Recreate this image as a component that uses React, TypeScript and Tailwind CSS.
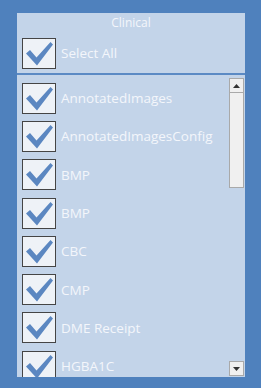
const items = [
  "AnnotatedImages",
  "AnnotatedImagesConfig",
  "BMP",
  "BMP",
  "CBC",
  "CMP",
  "DME Receipt",
  "HGBA1C",
];

function CheckBox() {
  return (
    <div className="w-[34px] h-[31px] shrink-0 border border-[#454545] bg-[#eef2f7] flex items-center justify-center">
      <svg width="30" height="27" viewBox="0 0 30 27">
        <polygon
          points="2,13.5 6,10 12.5,17.5 26.5,2 29,4.5 13,25.5"
          fill="#5b87c1"
        />
      </svg>
    </div>
  );
}

function Row({ label }: { label: string }) {
  return (
    <div className="flex items-center h-[38.3px] shrink-0 pl-[5px] gap-[5px]">
      <CheckBox />
      <span className="text-[13.5px] text-[#f3f6fb] whitespace-nowrap">{label}</span>
    </div>
  );
}

export default function App() {
  return (
    <div
      className="w-[261px] h-[388px] bg-[#4f81bd] pt-[13px] pl-[17px]"
      style={{ fontFamily: '"Open Sans", "Noto Sans", sans-serif' }}
    >
      <div className="w-[228px] h-[364px] bg-[#c3d4e9] flex flex-col overflow-hidden">
        <div className="h-[20px] flex items-center justify-center text-[12px] text-[#f3f6fb]">
          Clinical
        </div>
        <div className="flex items-center h-[38px] pl-[5px] gap-[5px] pt-[2px]">
          <CheckBox />
          <span className="text-[13.5px] text-[#f3f6fb]">Select All</span>
        </div>
        <div className="h-[2px] mt-[2px] bg-[#5b8ac4]" />
        <div className="flex flex-1 min-h-0">
          <div className="flex-1 flex flex-col overflow-hidden pt-[4px]">
            {items.map((label, i) => (
              <Row key={i} label={label} />
            ))}
          </div>
          <div className="w-[15px] mr-[1px] mt-[3px] mb-[1px] flex flex-col">
            <div className="h-[15px] border border-[#a9a9a9] bg-[#f0f0f0] flex items-center justify-center">
              <svg width="7" height="4" viewBox="0 0 7 4">
                <polygon points="3.5,0 7,4 0,4" fill="#333" />
              </svg>
            </div>
            <div className="h-[95px] border border-[#a9a9a9] border-t-0 bg-[#f0f0f0]" />
            <div className="flex-1" />
            <div className="h-[15px] border border-[#a9a9a9] bg-[#f0f0f0] flex items-center justify-center">
              <svg width="7" height="4" viewBox="0 0 7 4">
                <polygon points="0,0 7,0 3.5,4" fill="#333" />
              </svg>
            </div>
          </div>
        </div>
      </div>
    </div>
  );
}
